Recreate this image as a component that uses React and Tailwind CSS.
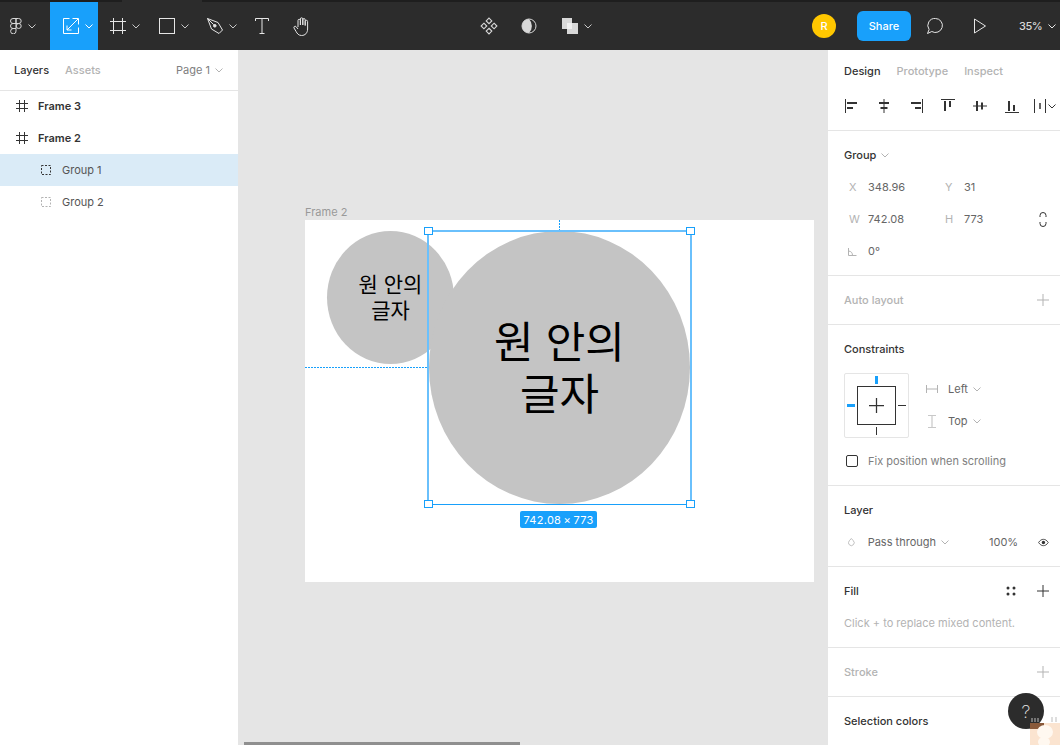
import React from "react";

const Chev = ({ c = "#b3b3b3", className = "" }) => (
  <svg width="8" height="5" viewBox="0 0 8 5" className={`shrink-0 ${className}`}><path d="M0.5 0.5 L4 4 L7.5 0.5" fill="none" stroke={c} strokeWidth="1" /></svg>
);
const Hash = ({ c = "#333" }) => (
  <svg width="12" height="12" viewBox="0 0 12 12"><path d="M3.5 0v12M8.5 0v12M0 3.5h12M0 8.5h12" fill="none" stroke={c} strokeWidth="1" /></svg>
);
const Plus = ({ c = "#333", s = 12 }) => (
  <svg width={s} height={s} viewBox="0 0 12 12"><path d="M6 0v12M0 6h12" fill="none" stroke={c} strokeWidth="1" /></svg>
);
const Dashed = ({ c }) => (
  <svg width="10" height="10" viewBox="0 0 10 10"><rect x=".5" y=".5" width="9" height="9" fill="none" stroke={c} strokeWidth="1" strokeDasharray="2 1.5" /></svg>
);

const Tool = ({ w, active, children, chev, pad = "" }) => (
  <div className={`flex h-full shrink-0 items-center justify-center gap-[6px] ${w} ${pad} ${active ? "bg-[#18a0fb]" : ""}`}>
    {children}
    {chev && <Chev c={active ? "#fff" : "#c8c8c8"} />}
  </div>
);

const Align = ({ thin, thick }) => (
  <svg width="16" height="16" viewBox="0 0 16 16" fill="none" stroke="#333">
    <path d={thin} strokeWidth="1" />
    <path d={thick} strokeWidth="2" />
  </svg>
);

const Section = ({ className = "", children }) => (
  <div className={`shrink-0 border-b border-[#e5e5e5] pl-4 pr-[11px] ${className}`}>{children}</div>
);

const Field = ({ l, v, w = "w-[96px]" }) => (
  <div className={`flex items-center ${w}`}>
    <span className="w-6 pl-[5px] text-[11px] text-[#b3b3b3]">{l}</span>
    <span className="text-[11px] text-[#666]">{v}</span>
  </div>
);

const Handle = ({ cls }) => (
  <div className={`absolute h-[8px] w-[9px] border border-[#18a0fb] bg-white ${cls}`} />
);

function Row1({ label }) {
  return (
    <div className="flex h-8 items-center pl-[16px]">
      <Hash />
      <span className="ml-[10px] text-[11px] font-semibold text-[#333]">{label}</span>
    </div>
  );
}
function Row2({ label, c, sel }) {
  return (
    <div className={`flex h-8 items-center pl-[41px] ${sel ? "bg-[#daebf7]" : ""}`}>
      <Dashed c={c} />
      <span className="ml-[11px] text-[11px] text-[#555]">{label}</span>
    </div>
  );
}

export default function App() {
  return (
    <div className="relative flex h-[745px] w-[1060px] flex-col overflow-hidden bg-[#e5e5e5] font-['Inter','Noto_Sans_CJK_KR',sans-serif]">
      {/* toolbar */}
      <header className="relative flex h-[50px] shrink-0 items-stretch border-t-2 border-[#1e1e1e] bg-[#2c2c2c]">
        <div className="absolute -top-[2px] left-[122px] h-[2px] w-[80px] bg-[#2c2c2c]" />
        <Tool w="w-[50px]" pad="pr-[4px]" chev>
          <svg width="12" height="16" viewBox="0 0 12 16" fill="none" stroke="#d8d8d8" strokeWidth="1">
            <path d="M6 .5H3a2.5 2.5 0 0 0 0 5h3zM6 .5h2.7a2.5 2.5 0 0 1 0 5H6zM6 5.500H3a2.5 2.5 0 0 0 0 5h3zM8.700 5.500a2.500 2.500 0 1 1 0 5 2.500 2.500 0 0 1 0-5zM3 10.500h3v2.500a2.700 2.700 0 1 1-3-2.500z" />
          </svg>
        </Tool>
        <Tool w="w-[48px]" pad="pl-[8px]" active chev>
          <svg width="16" height="16" viewBox="0 0 16 16" fill="none" stroke="#fff" strokeWidth="1">
            <path d="M6.500.5H.5v15h15V9.500M4 12 15 1M9.500.5h6v6M4 7.500V12h4.500" />
          </svg>
        </Tool>
        <Tool w="w-[48px]" pad="pl-[6px]" chev>
          <svg width="16" height="16" viewBox="0 0 16 16"><path d="M3.500 0v16M12.500 0v16M0 3.500h16M0 12.500h16" fill="none" stroke="#e6e6e6" strokeWidth="1" /></svg>
        </Tool>
        <Tool w="w-[48px]" pad="pl-[8px]" chev>
          <svg width="16" height="16" viewBox="0 0 16 16"><rect x=".5" y=".5" width="15" height="15" fill="none" stroke="#e6e6e6" strokeWidth="1" /></svg>
        </Tool>
        <Tool w="w-[48px]" pad="pl-[8px]" chev>
          <svg width="16" height="16" viewBox="0 0 16 16" fill="none" stroke="#e6e6e6" strokeWidth="1">
            <path d="M.5.5 11 4.500 15.500 12 12 15.500 4.500 11zM.5.5 6.700 6.700" /><circle cx="7.800" cy="7.800" r="1.300" fill="#e6e6e6" />
          </svg>
        </Tool>
        <Tool w="w-[40px]">
          <svg width="14" height="16" viewBox="0 0 14 16" fill="none" stroke="#e6e6e6" strokeWidth="1"><path d="M.5 3V.5h13V3M7 .5v15M4.500 15.500h5" /></svg>
        </Tool>
        <Tool w="w-[40px]">
          <svg width="18" height="19" viewBox="0 0 18 19" fill="none" stroke="#e6e6e6" strokeWidth="1">
            <path d="M5 10V3.500a1.200 1.200 0 0 1 2.400 0V8M7.400 8V2a1.200 1.200 0 0 1 2.400 0v6M9.800 8V2.800a1.200 1.200 0 0 1 2.400 0V8.500M12.200 8.500V4.500a1.200 1.200 0 0 1 2.400 0V12c0 4-2.500 6.500-6 6.500-3 0-4.500-2-5.500-4L1 11c-.6-1.200 1-2.400 2-1.400L5 12" />
          </svg>
        </Tool>

        <div className="ml-[147px] flex w-[40px] shrink-0 items-center justify-center">
          <svg width="18" height="18" viewBox="0 0 16 16" fill="none" stroke="#d8d8d8" strokeWidth="1">
            <path d="M8 1 10.500 3.500 8 6 5.500 3.500zM3.500 5.500 6 8 3.500 10.500 1 8zM12.500 5.500 15 8 12.500 10.500 10 8zM8 10 10.500 12.500 8 15 5.500 12.500z" />
          </svg>
        </div>
        <div className="flex w-[40px] shrink-0 items-center justify-center">
          <svg width="16" height="16" viewBox="0 0 16 16"><circle cx="8" cy="8" r="7" fill="none" stroke="#d8d8d8" /><path d="M8 1a7 7 0 0 0 0 14 10 10 0 0 0 0-14z" fill="#d8d8d8" /></svg>
        </div>
        <div className="flex shrink-0 items-center gap-[5px] pl-[13px]">
          <svg width="16" height="16" viewBox="0 0 16 16"><path d="M0 0h10v5h6v11H5v-5H0z" fill="#d8d8d8" /><path d="M5 5h5v6H5z" fill="#f0f0f0" /></svg>
          <Chev c="#c8c8c8" className="ml-[1px]" />
        </div>

        <div className="ml-[220px] flex shrink-0 items-center">
          <div className="flex h-6 w-6 items-center justify-center rounded-full bg-[#ffc700] text-[11px] font-medium text-white">R</div>
        </div>
        <div className="ml-[21px] flex shrink-0 items-center">
          <div className="flex h-[30px] w-[54px] items-center justify-center rounded-[6px] bg-[#18a0fb] text-[11px] font-medium text-white">Share</div>
        </div>
        <div className="ml-[14px] flex w-[20px] shrink-0 items-center justify-center">
          <svg width="18" height="18" viewBox="0 0 18 18" fill="none" stroke="#e6e6e6" strokeWidth="1"><path d="M9.500 1.500a7 7 0 1 1-3.700 13l-4.300 2 1.600-4A7 7 0 0 1 9.500 1.500z" /></svg>
        </div>
        <div className="ml-[25px] flex w-[20px] shrink-0 items-center justify-center">
          <svg width="14" height="16" viewBox="0 0 14 16" fill="none" stroke="#e6e6e6" strokeWidth="1"><path d="M1.500 1 12.500 8 1.500 15z" /></svg>
        </div>
        <div className="ml-[29px] flex shrink-0 items-center gap-[6px] whitespace-nowrap text-[11px] font-medium tracking-[-0.5px] text-[#d8d8d8]">
          <span>35%</span>
          <svg width="8" height="5" viewBox="0 0 8 5" className="shrink-0"><path d="M0.5 0.5 L4 4 L7.5 0.5" fill="none" stroke="#e6e6e6" strokeWidth="1" /></svg>
        </div>
      </header>

      <main className="flex min-h-0 flex-1">
        {/* layers panel */}
        <aside className="w-[238px] shrink-0 bg-white">
          <div className="-mb-px flex h-[41px] items-center border-b border-[#e5e5e5] pl-[14px] pr-[15px] pt-[1px] text-[11px]">
            <span className="font-medium text-[#333]">Layers</span>
            <span className="ml-[16px] font-medium text-[#b3b3b3]">Assets</span>
            <span className="ml-auto text-[#808080]">Page 1</span>
            <Chev className="ml-[5px]" />
          </div>
          <div>
            <Row1 label="Frame 3" />
            <Row1 label="Frame 2" />
            <Row2 label="Group 1" c="#333" sel />
            <Row2 label="Group 2" c="#b3b3b3" />
          </div>
        </aside>

        {/* canvas */}
        <section className="relative min-w-0 flex-1 overflow-hidden bg-[#e5e5e5]">
          <span className="absolute left-[67px] top-[154px] text-[11px] text-[#999]">Frame 2</span>
          <div className="absolute left-[67px] top-[170px] h-[362px] w-[509px] bg-white" />
          <div className="absolute left-[89px] top-[181px] flex h-[133px] w-[127px] items-center justify-center rounded-[50%] bg-[#c4c4c4] text-center text-[21px] leading-[26px] text-black">
            <span>원 안의<br />글자</span>
          </div>
          <div className="absolute left-[67px] top-[317px] h-px w-[122px] bg-[repeating-linear-gradient(90deg,#18a0fb_0_2px,transparent_2px_3px)]" />
          <div className="absolute left-[321px] top-[170px] h-[11px] w-px bg-[repeating-linear-gradient(180deg,#18a0fb_0_2px,transparent_2px_3px)]" />
          <div className="absolute left-[191px] top-[181px] flex h-[273px] w-[261px] items-center justify-center rounded-[50%] bg-[#c4c4c4] text-center text-[43px] leading-[52px] text-black">
            <span>원 안의<br />글자</span>
          </div>
          <div className="absolute left-[189px] top-[180px] h-[275px] w-[265px] border-2 border-[#6ac0fc] border-b-[#18a0fb] [border-bottom-width:1px]" />
          <Handle cls="left-[186px] top-[177px]" />
          <Handle cls="left-[448px] top-[177px]" />
          <Handle cls="left-[186px] top-[450px]" />
          <Handle cls="left-[448px] top-[450px]" />
          <div className="absolute left-[282px] top-[461px] flex h-[17px] w-[77px] items-center justify-center rounded-[2px] bg-[#18a0fb] pt-px text-[11px] tracking-[0.3px] text-white">742.08{"\u2009×\u2009"}773</div>
          <div className="absolute bottom-0 left-[6px] h-[3px] w-[276px] bg-[#8f8f8f]" />
        </section>

        {/* properties panel */}
        <aside className="flex w-[232px] shrink-0 flex-col overflow-hidden bg-white">
          <Section className="h-[81px] !pl-0 !pr-0">
            <div className="flex h-[41px] items-center gap-[16px] pl-4 pt-[1px] text-[11px] font-medium">
              <span className="text-[#333]">Design</span>
              <span className="text-[#b3b3b3]">Prototype</span>
              <span className="text-[#b3b3b3]">Inspect</span>
            </div>
            <div className="flex items-center pl-4 pt-[7px]">
              <div className="flex w-[212px] items-center gap-[16px]">
                <Align thin="M1.500 1v14" thick="M3 5h10M3 10h6" />
                <Align thin="M8 1v14" thick="M3 5h10M4.500 10h7" />
                <Align thin="M14.500 1v14" thick="M3 5h10M7 10h6" />
                <Align thin="M1 1.500h14" thick="M5 3v10M10 3v6" />
                <Align thin="M1 8h14" thick="M5 3v10M10 4.500v7" />
                <Align thin="M1 14.500h14" thick="M5 3v10M10 7v6" />
                <div className="-ml-[2px] flex items-center gap-[2px]">
                  <svg width="12" height="16" viewBox="0 0 12 16"><path d="M.5 1v14M11.500 1v14" stroke="#333" fill="none" /><path d="M6 5v6" stroke="#333" strokeWidth="1.500" /></svg>
                  <Chev c="#333" />
                </div>
              </div>
            </div>
          </Section>

          <Section className="h-[145px] pt-[17px]">
            <div className="flex items-center gap-[5px] text-[11px] font-medium leading-[14px] text-[#333]">Group <Chev /></div>
            <div className="mt-[18px] flex h-[14px] items-center">
              <Field l="X" v="348.96" /><Field l="Y" v="31" />
            </div>
            <div className="relative mt-[18px] flex h-[14px] items-center">
              <Field l="W" v="742.08" /><Field l="H" v="773" />
              <svg className="absolute left-[195px] top-0" width="8" height="15" viewBox="0 0 8 15" fill="none" stroke="#333"><path d="M1 5V3.500a3 3 0 0 1 6 0V5M1 10v1.500a3 3 0 0 0 6 0V10" /></svg>
            </div>
            <div className="mt-[18px] flex h-[14px] items-center">
              <div className="flex w-6 pl-[4px]">
                <svg width="9" height="9" viewBox="0 0 9 9" fill="none" stroke="#b3b3b3"><path d="M.5 1v7.500H8.500M.5 4a4.500 4.500 0 0 1 4 4.500" /></svg>
              </div>
              <span className="text-[11px] text-[#666]">0°</span>
            </div>
          </Section>

          <Section className="flex h-[49px] items-center justify-between">
            <span className="text-[11px] font-medium text-[#b3b3b3]">Auto layout</span>
            <Plus c="#b3b3b3" />
          </Section>

          <Section className="h-[161px] pt-[17px]">
            <div className="text-[11px] font-medium leading-[14px] text-[#333]">Constraints</div>
            <div className="mt-[17px] flex">
              <div className="relative h-[65px] w-[65px] rounded-[2px] border border-[#e5e5e5]">
                <div className="absolute left-[12px] top-[12px] flex h-[39px] w-[39px] items-center justify-center border border-[#333]"><Plus s={15} /></div>
                <div className="absolute left-[30px] top-[2px] h-[8px] w-[3px] bg-[#18a0fb]" />
                <div className="absolute bottom-[2px] left-[31px] h-[8px] w-px bg-[#333]" />
                <div className="absolute left-[2px] top-[30px] h-[3px] w-[8px] bg-[#18a0fb]" />
                <div className="absolute right-[2px] top-[31px] h-px w-[8px] bg-[#333]" />
              </div>
              <div className="ml-[17px] pt-[2px] text-[11px] text-[#666]">
                <div className="flex h-[28px] items-center">
                  <svg width="12" height="8" viewBox="0 0 12 8" fill="none" stroke="#b3b3b3"><path d="M.5 0v8M11.500 0v8M.5 4h11" /></svg>
                  <span className="ml-[10px]">Left</span><Chev className="ml-[5px]" />
                </div>
                <div className="mt-[4px] flex h-[28px] items-center">
                  <svg className="ml-[2px]" width="8" height="13" viewBox="0 0 8 13" fill="none" stroke="#c8c8c8" strokeWidth="1.200"><path d="M0 .5h8M0 12.500h8M4 .5v12" /></svg>
                  <span className="ml-[12px]">Top</span><Chev className="ml-[5px]" />
                </div>
              </div>
            </div>
            <div className="mt-[16px] flex h-[14px] items-center text-[11px] text-[#808080]">
              <div className="ml-[2px] h-[12px] w-[12px] rounded-[2px] border border-[#333]" />
              <span className="ml-[10px]">Fix position when scrolling</span>
            </div>
          </Section>

          <Section className="h-[81px] pt-[17px]">
            <div className="text-[11px] font-medium leading-[14px] text-[#333]">Layer</div>
            <div className="mt-[18px] flex h-[14px] items-center whitespace-nowrap text-[11px] text-[#666]">
              <svg className="ml-[4px]" width="8" height="10" viewBox="0 0 8 10" fill="none" stroke="#b3b3b3"><path d="M4 .8 1.600 3.500a3.400 3.400 0 1 0 4.800 0z" /></svg>
              <span className="ml-[13px]">Pass through</span><Chev className="ml-[5px]" />
              <span className="ml-[40px]">100%</span>
              <svg className="ml-[20px]" width="13" height="9" viewBox="0 0 13 9"><path d="M.7 4.500C2.500 1.800 4.300.7 6.500.7s4 1.100 5.800 3.800c-1.800 2.700-3.600 3.800-5.800 3.800S2.500 7.200.7 4.500z" fill="none" stroke="#333" /><circle cx="6.500" cy="4.500" r="2" fill="#333" /></svg>
            </div>
          </Section>

          <Section className="h-[81px] pt-[17px]">
            <div className="flex h-[14px] items-center justify-between">
              <span className="text-[11px] font-medium text-[#333]">Fill</span>
              <div className="flex items-center">
                <svg width="10" height="10" viewBox="0 0 10 10" fill="#333"><circle cx="2" cy="2" r="1.500" /><circle cx="8" cy="2" r="1.500" /><circle cx="2" cy="8" r="1.500" /><circle cx="8" cy="8" r="1.500" /></svg>
                <div className="ml-[21px]"><Plus /></div>
              </div>
            </div>
            <div className="mt-[18px] text-[11px] leading-[14px] text-[#b3b3b3]">Click + to replace mixed content.</div>
          </Section>

          <Section className="flex h-[49px] items-center justify-between">
            <span className="text-[11px] font-medium text-[#b3b3b3]">Stroke</span>
            <Plus c="#b3b3b3" />
          </Section>

          <div className="px-4 pt-[17px] text-[11px] font-medium leading-[14px] text-[#333]">Selection colors</div>
        </aside>
      </main>

      {/* help button */}
      <div className="absolute left-[1008px] top-[693px] flex h-9 w-9 items-center justify-center rounded-full bg-[#2c2c2c] text-[18px] font-extralight text-[#e6e6e6]">?</div>
      {/* watermark mascot */}
      <svg className="absolute left-[1030px] top-[715px]" width="30" height="30" viewBox="0 0 30 30">
        <rect x="0" y="8" width="30" height="22" fill="#fbe4d0" />
        <rect x="0" y="8" width="14" height="6" fill="#8a5a3a" />
        <ellipse cx="15" cy="17" rx="8" ry="7" fill="#fff8f0" />
        <ellipse cx="14" cy="27" rx="6" ry="5" fill="#fff8f0" />
        <path d="M2 3v4M5 3v4M8 3v4M22 2v5M26 2v5" stroke="#bdbdbd" strokeWidth="1" />
      </svg>
    </div>
  );
}
